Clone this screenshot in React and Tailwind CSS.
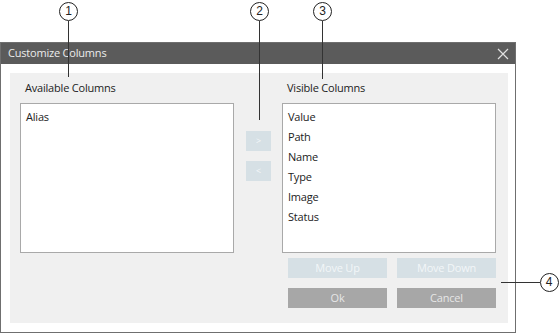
const font = { fontFamily: '"Open Sans", "Noto Sans", "Liberation Sans", sans-serif' };

const Callout = ({ n, x, y }) => (
  <div
    className="absolute w-[19px] h-[19px] rounded-full border border-[#222] bg-white flex items-center justify-center text-[12px] leading-none text-[#222]"
    style={{ left: x - 9.5, top: y - 9.5, fontFamily: '"Liberation Sans", sans-serif' }}
  >
    {n}
  </div>
);

const Btn = ({ label, dark }) => (
  <div
    className={`w-[99px] h-[20px] flex items-center justify-center text-[11px] tracking-[-0.2px] ${
      dark ? "bg-[#a7a7a7] text-[#e6e6e6]" : "bg-[#d6e0e5] text-[#f2f6f8]"
    }`}
  >
    {label}
  </div>
);

export default function App() {
  const visible = ["Value", "Path", "Name", "Type", "Image", "Status"];
  return (
    <div className="relative w-[559px] h-[334px] bg-white overflow-hidden" style={font}>
      <div className="pt-[42px]">
        <div className="w-[516px] h-[291px] border border-[#6f6f6f] flex flex-col">
          <div className="h-[21px] bg-[#5b5b5b] flex items-center justify-between pl-[7px] pr-[6px]">
            <span className="text-[11px] tracking-[-0.2px] text-[#ececec]">Customize Columns</span>
            <svg width="12" height="12" viewBox="0 0 12 12" stroke="#e0e0e0" strokeWidth="1.2">
              <path d="M1 1 L11 11 M11 1 L1 11" />
            </svg>
          </div>
          <div className="flex-1 pt-[9px] pl-[9px] pr-[7px] pb-[9px]">
            <div className="h-full bg-[#f0f0f0] flex pl-[10px] gap-[12px]">
              <div className="w-[214px] flex flex-col">
                <div className="h-[30px] flex items-center pl-[5px] text-[11px] tracking-[-0.2px] text-[#222]">
                  Available Columns
                </div>
                <div className="h-[150px] bg-white border border-[#a9a9a9] pl-[5px] pt-[3px] text-[11px] tracking-[-0.2px] leading-[20px] text-[#222]">
                  Alias
                </div>
              </div>
              <div className="w-[25px] pt-[58px] flex flex-col gap-[10px] -mr-[1px]">
                <div className="h-[20px] bg-[#d6e0e5] text-[9px] text-[#f4f7f9] flex items-center justify-center">&gt;</div>
                <div className="h-[20px] bg-[#d6e0e5] text-[9px] text-[#f4f7f9] flex items-center justify-center">&lt;</div>
              </div>
              <div className="w-[214px] flex flex-col">
                <div className="h-[30px] flex items-center pl-[5px] text-[11px] tracking-[-0.2px] text-[#222]">
                  Visible Columns
                </div>
                <div className="h-[150px] bg-white border border-[#a9a9a9] pl-[5px] pt-[3px] text-[11px] tracking-[-0.2px] leading-[20px] text-[#222]">
                  {visible.map((v) => (
                    <div key={v}>{v}</div>
                  ))}
                </div>
                <div className="pl-[6px] mt-[5px] flex flex-col gap-[10px]">
                  <div className="flex gap-[10px]">
                    <Btn label="Move Up" />
                    <Btn label="Move Down" />
                  </div>
                  <div className="flex gap-[10px]">
                    <Btn label="Ok" dark />
                    <Btn label="Cancel" dark />
                  </div>
                </div>
              </div>
            </div>
          </div>
        </div>
      </div>

      <div className="absolute left-[68px] top-[21px] w-px h-[56px] bg-[#333]" />
      <div className="absolute left-[259px] top-[21px] w-px h-[99px] bg-[#333]" />
      <div className="absolute left-[322px] top-[21px] w-px h-[58px] bg-[#333]" />
      <div className="absolute left-[501px] top-[282px] w-[39px] h-px bg-[#333]" />
      <Callout n="1" x={68.5} y={11} />
      <Callout n="2" x={259.5} y={11} />
      <Callout n="3" x={322.5} y={11} />
      <Callout n="4" x={549} y={282} />
    </div>
  );
}
